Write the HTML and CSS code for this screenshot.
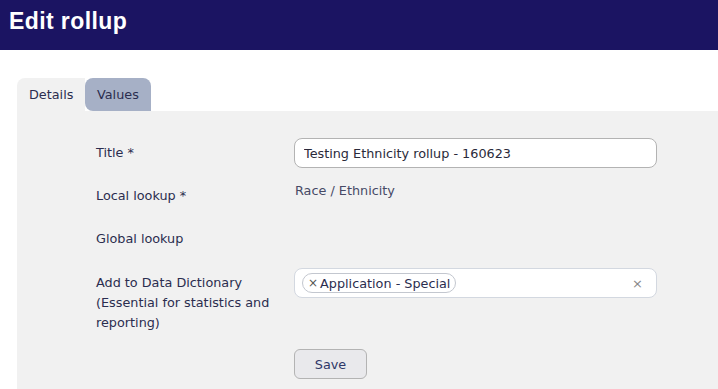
FILE: index.html
```html
<!DOCTYPE html>
<html lang="en">
<head>
<meta charset="utf-8">
<title>Edit rollup</title>
<link rel="stylesheet" href="styles.css">
</head>
<body>
<header class="topbar">
  <h1 class="topbar-title">Edit rollup</h1>
</header>
<main class="content">
  <nav class="tabs">
    <a class="tab tab-active">Details</a>
    <a class="tab tab-inactive">Values</a>
  </nav>
  <section class="panel">
    <form class="form">
      <div class="row">
        <label class="label">Title *</label>
        <div class="field"><input class="input" type="text" value="Testing Ethnicity rollup - 160623"></div>
      </div>
      <div class="row">
        <label class="label">Local lookup *</label>
        <div class="field"><span class="static">Race / Ethnicity</span></div>
      </div>
      <div class="row">
        <label class="label">Global lookup</label>
        <div class="field"></div>
      </div>
      <div class="row row-dict">
        <label class="label">Add to Data Dictionary (Essential for statistics and reporting)</label>
        <div class="field">
          <div class="select">
            <span class="tag"><span class="tag-x">×</span>Application - Special</span>
            <span class="clear">×</span>
          </div>
        </div>
      </div>
      <div class="row row-actions">
        <div class="label"></div>
        <div class="field"><button class="btn" type="button">Save</button></div>
      </div>
    </form>
  </section>
</main>
</body>
</html>
```

FILE: styles.css
```css
html, body {
  margin: 0;
  padding: 0;
  background: #ffffff;
  font-family: "DejaVu Sans", "Noto Sans", sans-serif;
  font-size: 12.8px;
  color: #2b2d4f;
}

.topbar {
  background: #1b1462;
  height: 50px;
  display: flex;
  align-items: center;
  padding-left: 9px;
}

.topbar-title {
  margin: 0;
  color: #ffffff;
  font-family: "Liberation Sans", Arial, sans-serif;
  font-size: 23px;
  font-weight: bold;
  letter-spacing: 0.4px;
  padding-bottom: 8px;
}

.content {
  padding: 28px 0 0 17px;
}

.tabs {
  display: flex;
  height: 33px;
}

.tab {
  display: flex;
  align-items: center;
  padding: 0 12px;
  height: 33px;
  box-sizing: border-box;
  color: #2b2d4f;
}

.tab-active {
  width: 68px;
  background: #f1f1f1;
  border-radius: 8px 0 0 0;
}

.tab-inactive {
  width: 66px;
  background: #a6b0c6;
  border-radius: 8px 8px 0 8px;
}

.panel {
  background: #f1f1f1;
  padding: 27px 0 20px 79px;
  min-height: 274px;
  box-sizing: border-box;
}

.form {
  display: flex;
  flex-direction: column;
  gap: 13px;
}

.row {
  display: flex;
  min-height: 30px;
}

.row-dict {
  margin-top: 1px;
}

.row-actions {
  margin-top: 3px;
}

.label {
  width: 198px;
  flex: none;
  padding-top: 5px;
  line-height: 20px;
  box-sizing: border-box;
  padding-right: 14px;
}

.field {
  width: 363px;
  flex: none;
}

.input {
  width: 363px;
  height: 30px;
  box-sizing: border-box;
  border: 1px solid #b3b3b3;
  border-radius: 8px;
  background: #ffffff;
  padding: 0 9px;
  font-family: inherit;
  font-size: 12.8px;
  color: #2a2a3a;
  outline: none;
}

.static {
  display: block;
  line-height: 20px;
  padding-left: 1px;
  color: #474a66;
}

.select {
  width: 363px;
  height: 30px;
  box-sizing: border-box;
  border: 1px solid #d3d8e0;
  border-radius: 8px;
  background: #ffffff;
  display: flex;
  align-items: center;
  padding: 0 7px;
}

.tag {
  display: flex;
  align-items: center;
  height: 20px;
  box-sizing: border-box;
  border: 1px solid #c3c7cf;
  border-radius: 10px;
  padding: 0 5px 0 5px;
  color: #2b2d4f;
  white-space: nowrap;
}

.tag-x {
  font-size: 12px;
  color: #555;
  margin-right: 2px;
}

.clear {
  margin-left: auto;
  margin-right: 6px;
  color: #888;
  font-size: 13px;
}

.btn {
  width: 73px;
  height: 30px;
  background: #e9e9ec;
  border: 1px solid #b3b3b3;
  border-radius: 6px;
  color: #2f3768;
  font-family: inherit;
  font-size: 12.8px;
  padding: 0;
}
```
